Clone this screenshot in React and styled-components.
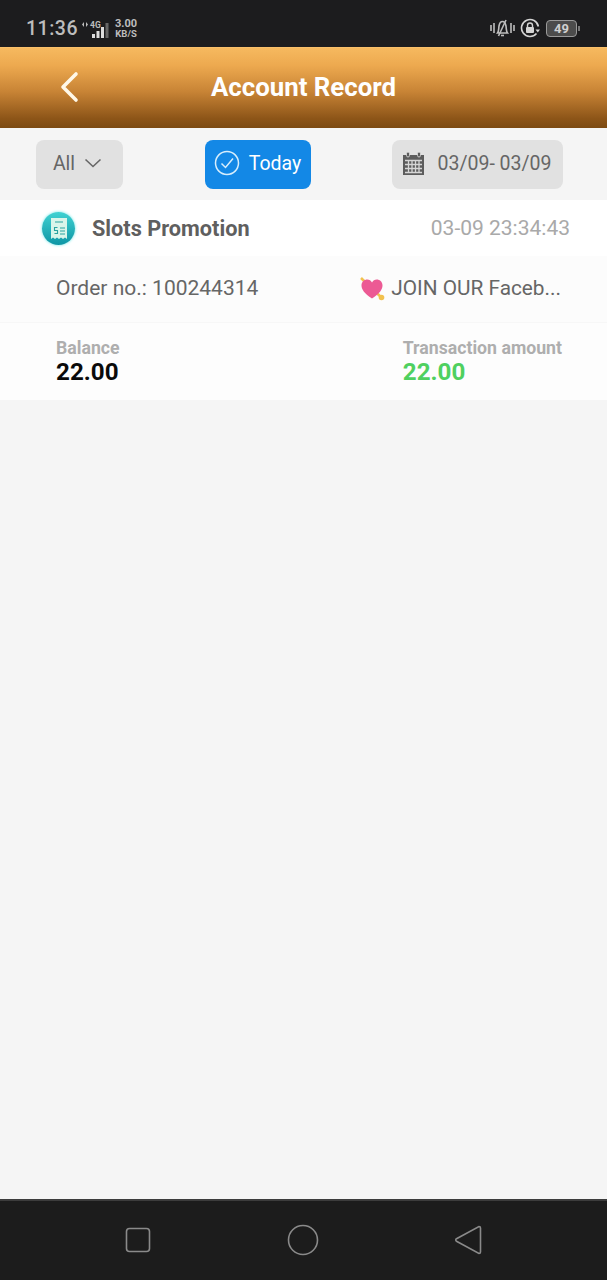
import styled, { createGlobalStyle } from 'styled-components'

const Global = createGlobalStyle`
  html, body {
    margin: 0;
    padding: 0;
    background: #f5f5f5;
    font-family: Roboto, "Liberation Sans", sans-serif;
  }
  * { box-sizing: border-box; }
`

const Page = styled.div`
  width: 607px;
  height: 1280px;
  display: flex;
  flex-direction: column;
  overflow: hidden;
  background: #f5f5f5;
`

const StatusBar = styled.div`
  height: 47px;
  flex: none;
  background: #1c1c1e;
  display: flex;
  align-items: center;
  justify-content: space-between;
  padding: 9px 30px 0 26px;
  color: #bdbdbd;
`

const StatusGroup = styled.div`
  display: flex;
  align-items: center;
`

const Clock = styled.span`
  font-size: 19.5px;
  font-weight: 500;
  letter-spacing: 0.5px;
  margin-right: 3px;
`

const NetSpeed = styled.div`
  font-size: 9.5px;
  font-weight: 700;
  line-height: 10px;
  text-align: center;
  margin-left: 6px;
  padding-top: 1px;
  & > span:first-child { font-size: 11px; display: block; }
`

const Battery = styled.div`
  width: 31px;
  height: 17px;
  border: 1px solid #9a9a9a;
  border-radius: 4px;
  background: #4c4c4c;
  color: #d0d0d0;
  font-size: 13px;
  font-weight: 700;
  line-height: 15px;
  text-align: center;
  margin-left: 6px;
  position: relative;
  &::after {
    content: '';
    position: absolute;
    right: -4px;
    top: 5px;
    width: 2px;
    height: 5px;
    background: #777;
  }
`

const LockIcon = styled.svg`
  margin-left: 5px;
`

const Header = styled.div`
  height: 81px;
  flex: none;
  display: flex;
  align-items: center;
  justify-content: center;
  position: relative;
  background: linear-gradient(180deg, #f6b95f 0%, #eda94f 22%, #c78335 55%, #8d5518 88%, #7c4a12 100%);
  border-top: 1px solid #f9c06a;
`

const BackButton = styled.div`
  position: absolute;
  left: 56px;
  top: 22px;
  width: 28px;
  height: 34px;
`

const Title = styled.h1`
  margin: 0 0 2px;
  color: #fff;
  font-size: 25.8px;
  font-weight: 700;
`

const FilterBar = styled.div`
  height: 72px;
  flex: none;
  display: flex;
  align-items: flex-start;
  justify-content: space-between;
  padding: 12px 44px 0 36px;
  background: #f5f5f5;
`

const Chip = styled.div`
  height: 49px;
  width: ${p => p.$w}px;
  padding: 0 ${p => p.$shift || 0}px 3px 0;
  border-radius: 8px;
  background: ${p => (p.$active ? '#1388e6' : '#e1e1e1')};
  color: ${p => (p.$active ? '#fff' : '#666')};
  font-size: 19.5px;
  display: flex;
  align-items: center;
  justify-content: center;
  gap: ${p => p.$gap || 0}px;
`

const Card = styled.div`
  background: #fff;
  flex: none;
`

const CardHead = styled.div`
  height: 56px;
  display: flex;
  align-items: center;
  justify-content: space-between;
  padding: 0 37px 0 42px;
`

const HeadLeft = styled.div`
  display: flex;
  align-items: center;
  gap: 17px;
`

const CoinIcon = styled.div`
  width: 33px;
  height: 33px;
  margin-top: 1px;
  border-radius: 50%;
  background: linear-gradient(180deg, #3fd2d2 0%, #0e96a5 100%);
  box-shadow: 0 0 3px #5fe6e6;
  display: flex;
  align-items: center;
  justify-content: center;
`

const CardName = styled.span`
  font-size: 21.7px;
  font-weight: 700;
  color: #5f5f5f;
`

const CardTime = styled.span`
  font-size: 21px;
  color: #a9a9a9;
`

const InfoRow = styled.div`
  height: 67px;
  display: flex;
  align-items: center;
  justify-content: space-between;
  padding: 0 46px 2px 56px;
  background: #fcfcfc;
  color: #666;
  font-size: 21px;
  border-bottom: 1px solid #f7f7f7;
`

const Note = styled.div`
  display: flex;
  align-items: center;
  gap: 6px;
  font-size: 20.8px;
`

const AmountRow = styled.div`
  height: 77px;
  display: flex;
  justify-content: space-between;
  padding: 15px 45px 0 56px;
  background: #fdfdfd;
`

const AmountCol = styled.div`
  display: flex;
  flex-direction: column;
`

const AmountLabel = styled.span`
  font-size: 17.7px;
  line-height: 20px;
  font-weight: 700;
  color: #aeaeae;
`

const AmountValue = styled.span`
  font-size: 24.2px;
  line-height: 28px;
  font-weight: 700;
  color: ${p => p.$color};
`

const Spacer = styled.div`
  flex: 1;
  background: #f5f5f5;
`

const NavBar = styled.div`
  height: 81px;
  flex: none;
  background: #1c1c1c;
  border-top: 2px solid #3c3c3c;
  display: flex;
  align-items: center;
  justify-content: space-between;
  padding: 0 125px 2px 125px;
`

export default function App() {
  return (
    <Page>
      <Global />
      <StatusBar>
        <StatusGroup>
          <Clock>11:36</Clock>
          <svg width="28" height="22" viewBox="0 0 28 22">
            <path d="M3 5 L1 7.5 L3 10 Z M5 5 L7 7.500 L5 10 Z" fill="#bdbdbd" />
            <text x="9" y="11" fontSize="8.5" fontWeight="700" fill="#bdbdbd" fontFamily="Roboto">4G</text>
            <rect x="11" y="17" width="3" height="4" fill="#ddd" />
            <rect x="15.5" y="14" width="3" height="7" fill="#ddd" />
            <rect x="20" y="10" width="3" height="11" fill="#ddd" />
            <rect x="24.5" y="6" width="3" height="15" fill="#666" />
          </svg>
          <NetSpeed><span>3.00</span><span>KB/S</span></NetSpeed>
        </StatusGroup>
        <StatusGroup>
          <svg width="25" height="20" viewBox="0 0 25 20" fill="none" stroke="#bdbdbd" strokeWidth="1.6">
            <path d="M1 7v6M4 5v10M21 5v10M24 7v6" />
            <path d="M7.500 15c1.500-2 1-4 1.500-7s2-4.500 3.500-4.500S15.500 5 16 8s0 5 1.500 7z" />
            <path d="M16 2 8.500 18" />
            <path d="M11 17.500h3" />
          </svg>
          <LockIcon width="20" height="20" viewBox="0 0 20 20" fill="none">
            <path d="M18.400 8.500A8.500 8.500 0 1 0 16.500 15.500" stroke="#d4d4d4" strokeWidth="1.600" />
            <path d="M15.500 11.500h4.500l-2.200 3z" fill="#d4d4d4" />
            <rect x="6" y="9" width="8" height="6" rx="1" fill="#d4d4d4" />
            <path d="M7.500 9V7.500a2.500 2.500 0 0 1 5 0V9" stroke="#d4d4d4" strokeWidth="1.400" />
          </LockIcon>
          <Battery>49</Battery>
        </StatusGroup>
      </StatusBar>

      <Header>
        <BackButton>
          <svg width="28" height="34" viewBox="0 0 28 34" fill="none">
            <path d="M20 4 7 17l13 13" stroke="#fff8e8" strokeWidth="3.600" strokeLinecap="round" strokeLinejoin="round" />
          </svg>
        </BackButton>
        <Title>Account Record</Title>
      </Header>

      <FilterBar>
        <Chip $w={87} $gap={9} $shift={4}>
          All
          <svg width="18" height="10" viewBox="0 0 18 10" fill="none">
            <path d="M1.500 1.500 9 8.500l7.500-7" stroke="#666" strokeWidth="1.600" />
          </svg>
        </Chip>
        <Chip $w={106} $gap={9} $active>
          <svg width="26" height="26" viewBox="0 0 26 26" fill="none" stroke="#d8eefc" strokeWidth="1.500">
            <circle cx="13" cy="13" r="11.500" />
            <path d="M7.500 13.500l4 4 7.500-9" />
          </svg>
          Today
        </Chip>
        <Chip $w={171} $gap={13} $shift={2}>
          <svg width="23" height="25" viewBox="0 0 23 25">
            <path d="M1 4h21v20H1z" fill="#5c5c5c" />
            <rect x="4.500" y="1" width="3" height="5" rx="1.500" fill="#5c5c5c" stroke="#e1e1e1" strokeWidth="0.800" />
            <rect x="15.500" y="1" width="3" height="5" rx="1.500" fill="#5c5c5c" stroke="#e1e1e1" strokeWidth="0.800" />
            <path d="M3 9.500h17M3 13.500h17M3 17.500h17M3 21.500h17M6.500 9v13M10 9v13M13.500 9v13M17 9v13" stroke="#d6d6d6" strokeWidth="1.300" />
          </svg>
          03/09- 03/09
        </Chip>
      </FilterBar>

      <Card>
        <CardHead>
          <HeadLeft>
            <CoinIcon>
              <svg width="18" height="24" viewBox="0 0 18 24">
                <path d="M1 1h16v21l-2-1.500-2 1.500-2-1.500-2 1.500-2-1.500-2 1.500-2-1.500-2 1.500z" fill="#d9f5ea" />
                <path d="M5 5h8M10 11h5M10 14h5M10 17h5" stroke="#2ba3a0" strokeWidth="1.200" />
                <path d="M7.500 10.500H4.500v3h3v3h-3" stroke="#2ba3a0" strokeWidth="1.100" fill="none" />
              </svg>
            </CoinIcon>
            <CardName>Slots Promotion</CardName>
          </HeadLeft>
          <CardTime>03-09 23:34:43</CardTime>
        </CardHead>
        <InfoRow>
          <span>Order no.: 100244314</span>
          <Note>
            <svg width="26" height="26" viewBox="0 0 26 26">
              <path d="M2 3 24 24" stroke="#f2c14e" strokeWidth="2.500" />
              <path d="M13 23.500C5.500 18.500 2.500 14.500 2.500 10.500 2.500 6.500 5.500 4.500 8.200 4.500c2.200 0 3.800 1 4.800 3 1-2 2.600-3 4.800-3 2.700 0 5.700 2 5.700 6 0 4-3 8-10.500 13z" fill="#ec5a94" />
              <circle cx="22.500" cy="22.500" r="2.800" fill="#f2c14e" />
            </svg>
            JOIN OUR Faceb...
          </Note>
        </InfoRow>
        <AmountRow>
          <AmountCol>
            <AmountLabel>Balance</AmountLabel>
            <AmountValue $color="#0a0a0a">22.00</AmountValue>
          </AmountCol>
          <AmountCol>
            <AmountLabel>Transaction amount</AmountLabel>
            <AmountValue $color="#4fd05f">22.00</AmountValue>
          </AmountCol>
        </AmountRow>
      </Card>

      <Spacer />

      <NavBar>
        <svg width="26" height="26" viewBox="0 0 26 26" fill="none">
          <rect x="1.500" y="1.500" width="23" height="23" rx="3" stroke="#8a8a8a" strokeWidth="1.600" />
        </svg>
        <svg width="32" height="32" viewBox="0 0 32 32" fill="none">
          <circle cx="16" cy="16" r="14.500" stroke="#8a8a8a" strokeWidth="1.600" />
        </svg>
        <svg width="28" height="32" viewBox="0 0 28 32" fill="none">
          <path d="M25 2.500c1 0 1.500.7 1.500 1.500v24c0 .8-.5 1.500-1.500 1.500L2.500 17.300c-1-.7-1-1.900 0-2.600z" stroke="#8a8a8a" strokeWidth="1.600" />
        </svg>
      </NavBar>
    </Page>
  )
}
